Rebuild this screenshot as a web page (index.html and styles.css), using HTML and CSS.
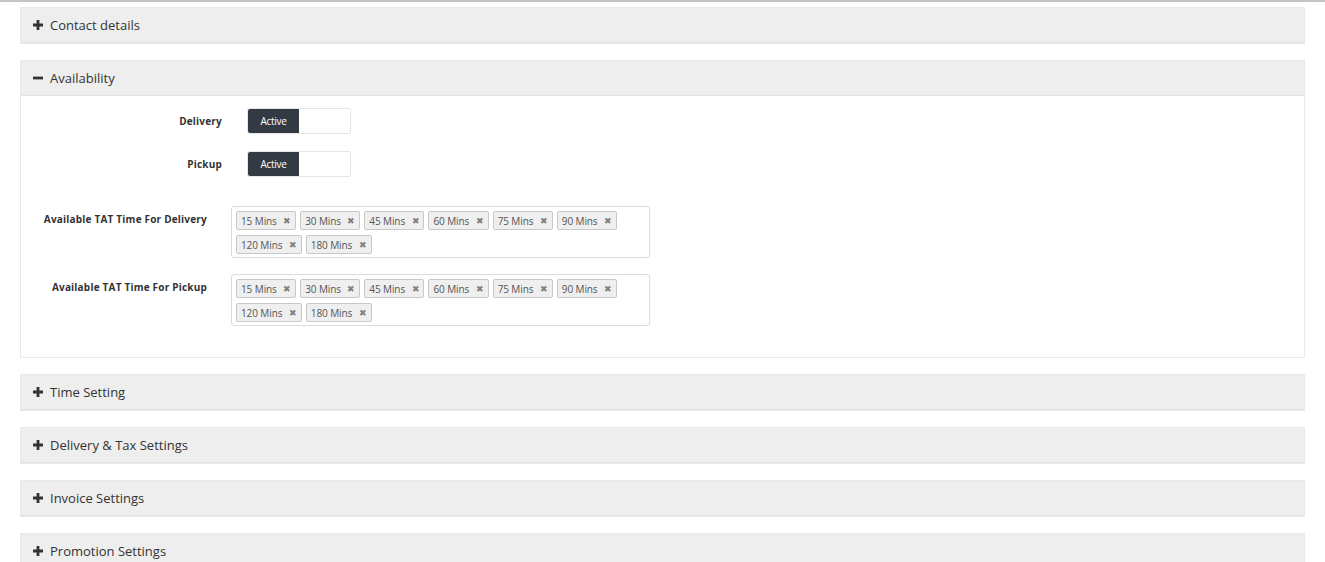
FILE: index.html
```html
<!DOCTYPE html>
<html>
<head>
<meta charset="utf-8">
<link rel="stylesheet" href="styles.css">
</head>
<body>
<div class="topline"></div>
<div class="wrap">
  <div class="panel">
    <div class="panel-head"><span class="ico"><svg viewBox="0 0 10 10" width="10" height="10"><path d="M3.6 0h2.8v3.6H10v2.8H6.4V10H3.6V6.4H0V3.6h3.6z" fill="#333"/></svg></span>Contact details</div>
  </div>
  <div class="panel">
    <div class="panel-head"><span class="ico"><svg viewBox="0 0 10 10" width="10" height="10"><path d="M0 3.6h10v2.8H0z" fill="#333"/></svg></span>Availability</div>
    <div class="panel-body">
      <div class="row row-toggle">
        <div class="label lbl-a">Delivery</div>
        <div class="toggle"><span class="on">Active</span><span class="off"></span></div>
      </div>
      <div class="row row-toggle">
        <div class="label lbl-a">Pickup</div>
        <div class="toggle"><span class="on">Active</span><span class="off"></span></div>
      </div>
      <div class="row row-tags first-tags">
        <div class="label lbl-b">Available TAT Time For Delivery</div>
        <div class="tagbox">
          <span class="tag">15 Mins <i>&#x2716;</i></span><span class="tag">30 Mins <i>&#x2716;</i></span><span class="tag">45 Mins <i>&#x2716;</i></span><span class="tag">60 Mins <i>&#x2716;</i></span><span class="tag">75 Mins <i>&#x2716;</i></span><span class="tag">90 Mins <i>&#x2716;</i></span><span class="tag">120 Mins <i>&#x2716;</i></span><span class="tag">180 Mins <i>&#x2716;</i></span>
        </div>
      </div>
      <div class="row row-tags">
        <div class="label lbl-b">Available TAT Time For Pickup</div>
        <div class="tagbox">
          <span class="tag">15 Mins <i>&#x2716;</i></span><span class="tag">30 Mins <i>&#x2716;</i></span><span class="tag">45 Mins <i>&#x2716;</i></span><span class="tag">60 Mins <i>&#x2716;</i></span><span class="tag">75 Mins <i>&#x2716;</i></span><span class="tag">90 Mins <i>&#x2716;</i></span><span class="tag">120 Mins <i>&#x2716;</i></span><span class="tag">180 Mins <i>&#x2716;</i></span>
        </div>
      </div>
    </div>
  </div>
  <div class="panel">
    <div class="panel-head"><span class="ico"><svg viewBox="0 0 10 10" width="10" height="10"><path d="M3.6 0h2.8v3.6H10v2.8H6.4V10H3.6V6.4H0V3.6h3.6z" fill="#333"/></svg></span>Time Setting</div>
  </div>
  <div class="panel">
    <div class="panel-head"><span class="ico"><svg viewBox="0 0 10 10" width="10" height="10"><path d="M3.6 0h2.8v3.6H10v2.8H6.4V10H3.6V6.4H0V3.6h3.6z" fill="#333"/></svg></span>Delivery &amp; Tax Settings</div>
  </div>
  <div class="panel">
    <div class="panel-head"><span class="ico"><svg viewBox="0 0 10 10" width="10" height="10"><path d="M3.6 0h2.8v3.6H10v2.8H6.4V10H3.6V6.4H0V3.6h3.6z" fill="#333"/></svg></span>Invoice Settings</div>
  </div>
  <div class="panel">
    <div class="panel-head"><span class="ico"><svg viewBox="0 0 10 10" width="10" height="10"><path d="M3.6 0h2.8v3.6H10v2.8H6.4V10H3.6V6.4H0V3.6h3.6z" fill="#333"/></svg></span>Promotion Settings</div>
  </div>
</div>
</body>
</html>
```

FILE: styles.css
```css
html, body {
  margin: 0;
  padding: 0;
  background: #fff;
  font-family: "Open Sans", "Liberation Sans", sans-serif;
  color: #333;
  overflow: hidden;
}
.topline {
  height: 2px;
  background: #c4c4c4;
}
.wrap {
  padding: 5px 20px 0;
}
.panel {
  border: 1px solid #e9e9e9;
  margin-bottom: 16px;
  background: #fff;
}
.panel-head {
  height: 34px;
  background: #eeeeee;
  border-bottom: 1px solid #e2e2e2;
  display: flex;
  align-items: center;
  padding-left: 12px;
  font-size: 13px;
  color: #333;
}
.ico {
  display: inline-flex;
  width: 10px;
  margin-right: 7px;
}
.panel-body {
  padding: 12px 0 31px;
}
.row {
  display: flex;
  align-items: flex-start;
}
.row-toggle {
  height: 26px;
  align-items: center;
  margin-bottom: 17px;
}
.label {
  font-size: 10px;
  font-weight: 700;
  text-align: right;
  color: #333;
  letter-spacing: 0.2px;
}
.lbl-a {
  width: 201px;
  margin-right: 25px;
}
.lbl-b {
  width: 186px;
  margin-right: 24px;
  padding-top: 6px;
}
.toggle {
  display: flex;
  width: 102px;
  height: 24px;
  border: 1px solid #e6e6e6;
  border-radius: 2px;
}
.on {
  width: 51px;
  background: #343a43;
  color: #fff;
  font-size: 10px;
  display: flex;
  align-items: center;
  justify-content: center;
  border-radius: 2px 0 0 2px;
  letter-spacing: -0.3px;
}
.off {
  flex: 1;
}
.first-tags {
  margin-top: 29px;
}
.row-tags {
  margin-bottom: 16px;
}
.row-tags:last-child {
  margin-bottom: 0;
}
.tagbox {
  width: 410px;
  border: 1px solid #dcdcdc;
  border-radius: 3px;
  padding: 4px 3px 3px 4px;
  display: flex;
  flex-wrap: wrap;
  gap: 5px 4px;
}
.tag {
  height: 17px;
  border: 1px solid #c8c8c8;
  border-radius: 2px;
  background: #efefef;
  font-size: 10px;
  color: #555;
  padding: 0 4px;
  display: inline-flex;
  align-items: center;
  gap: 4px;
  white-space: pre;
  letter-spacing: -0.1px;
}
.tag i {
  font-style: normal;
  font-size: 9px;
  color: #808080;
}
```
